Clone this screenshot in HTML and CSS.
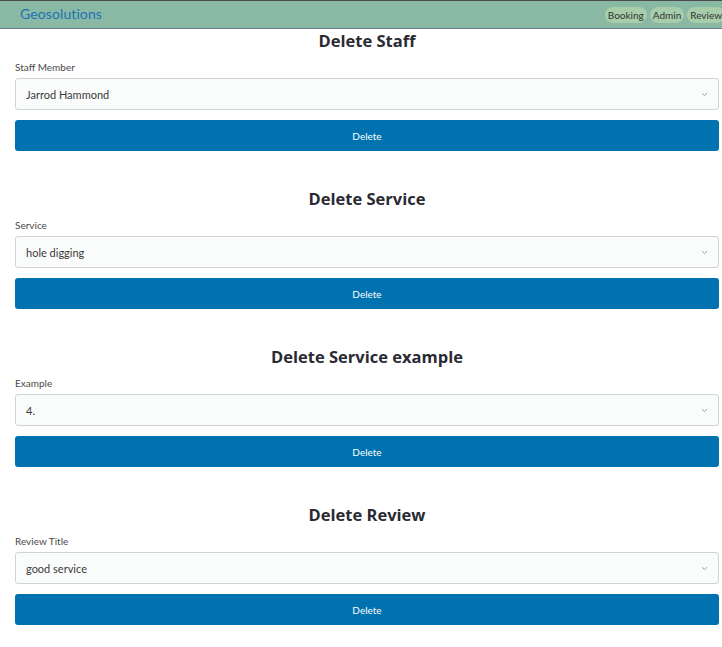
FILE: index.html
```html
<!DOCTYPE html>
<html lang="en">
<head>
<meta charset="utf-8">
<title>Geosolutions - Admin</title>
<link rel="stylesheet" href="styles.css">
</head>
<body>
<header class="topbar">
  <a class="brand" href="#">Geosolutions</a>
  <nav class="nav">
    <a class="pill" href="#">Booking</a>
    <a class="pill" href="#">Admin</a>
    <a class="pill" href="#">Review</a>
  </nav>
</header>
<main class="content">
  <section class="block">
    <h2 class="title">Delete Staff</h2>
    <label class="label">Staff Member</label>
    <div class="select"><span>Jarrod Hammond</span><svg class="chev" width="7" height="5" viewBox="0 0 7 5"><path d="M1 1.2 L3.5 3.6 L6 1.2" fill="none" stroke="#9aa0aa" stroke-width="1"/></svg></div>
    <button class="btn">Delete</button>
  </section>
  <section class="block">
    <h2 class="title">Delete Service</h2>
    <label class="label">Service</label>
    <div class="select"><span>hole digging</span><svg class="chev" width="7" height="5" viewBox="0 0 7 5"><path d="M1 1.2 L3.5 3.6 L6 1.2" fill="none" stroke="#9aa0aa" stroke-width="1"/></svg></div>
    <button class="btn">Delete</button>
  </section>
  <section class="block">
    <h2 class="title">Delete Service example</h2>
    <label class="label">Example</label>
    <div class="select"><span>4.</span><svg class="chev" width="7" height="5" viewBox="0 0 7 5"><path d="M1 1.2 L3.5 3.6 L6 1.2" fill="none" stroke="#9aa0aa" stroke-width="1"/></svg></div>
    <button class="btn">Delete</button>
  </section>
  <section class="block">
    <h2 class="title">Delete Review</h2>
    <label class="label">Review Title</label>
    <div class="select"><span>good service</span><svg class="chev" width="7" height="5" viewBox="0 0 7 5"><path d="M1 1.2 L3.5 3.6 L6 1.2" fill="none" stroke="#9aa0aa" stroke-width="1"/></svg></div>
    <button class="btn">Delete</button>
  </section>
</main>
</body>
</html>
```
FILE: styles.css
```css
* { box-sizing: border-box; }
html, body { margin: 0; padding: 0; background: #fff; }
body { font-family: Lato, "Noto Sans", sans-serif; color: #333; }

.topbar {
  height: 29px;
  background: #89b8a4;
  border-top: 1px solid #4d4d4d;
  border-bottom: 1px solid #6e7d8c;
  display: flex;
  align-items: center;
  justify-content: space-between;
  padding-left: 20px;
}
.brand {
  color: #1d72b5;
  font-size: 14px;
  text-decoration: none;
  letter-spacing: 0.1px;
  margin-top: -2px;
}
.nav { display: flex; gap: 3px; margin-right: -3px; margin-top: 1px; }
.pill {
  background: #a7cdaa;
  color: #333;
  font-size: 10px;
  line-height: 16px;
  height: 16px;
  padding: 0 3px;
  border-radius: 8px;
  text-decoration: none;
}

.content { padding: 0 3px 0 15px; }
.block { display: flex; flex-direction: column; margin-bottom: 36px; }
.title {
  margin: 1px 0 -1px;
  text-align: center;
  font-family: "Open Sans", sans-serif;
  font-weight: 700;
  font-size: 16.5px;
  line-height: 22px;
  color: #2a2a33;
}
.label {
  margin-top: 9px;
  margin-bottom: 4px;
  font-size: 10px;
  line-height: 14px;
  color: #4a4a4a;
}
.select {
  height: 32px;
  border: 1px solid #cfd3dc;
  border-radius: 3px;
  background: #fafbfb;
  display: flex;
  align-items: center;
  justify-content: space-between;
  padding: 0 10px 0 10px;
  font-size: 11px;
  color: #3a3a3a;
}
.chev { display: block; }
.btn {
  margin-top: 10px;
  height: 31px;
  border: none;
  border-radius: 3px;
  background: #0072b0;
  color: #fff;
  font-family: Lato, "Noto Sans", sans-serif;
  font-size: 10px;
  cursor: pointer;
}
```
